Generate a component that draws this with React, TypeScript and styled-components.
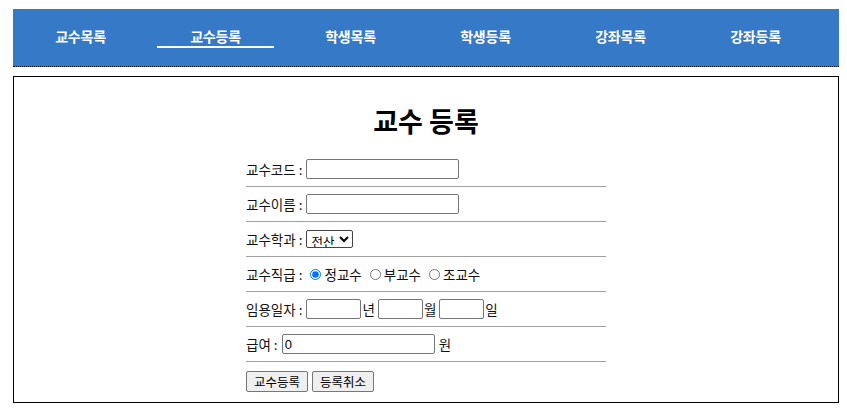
import { useState } from "react";
import styled, { createGlobalStyle } from "styled-components";

const GlobalStyle = createGlobalStyle`
  body {
    margin: 0;
    padding: 9px 8px 0 13px;
    background: #fff;
    font-family: "Noto Sans CJK KR", "Malgun Gothic", sans-serif;
    font-size: 13.5px;
    color: #111;
  }
`;

const menus = ["교수목록", "교수등록", "학생목록", "학생등록", "강좌목록", "강좌등록"];

export default function App() {
  const [rank, setRank] = useState("정교수");

  return (
    <>
      <GlobalStyle />
      <Header>
        <NavList>
          {menus.map((m) => (
            <NavItem key={m}>
              <NavLink $active={m === "교수등록"}>{m}</NavLink>
            </NavItem>
          ))}
        </NavList>
      </Header>

      <Main>
        <Title>교수 등록</Title>
        <Form onSubmit={(e) => e.preventDefault()}>
          <Row>
            <Label>교수코드 :</Label>
            <TextInput $width={153} />
          </Row>
          <Row>
            <Label>교수이름 :</Label>
            <TextInput $width={153} />
          </Row>
          <Row>
            <Label>교수학과 :</Label>
            <Select defaultValue="전산">
              <option>전산</option>
              <option>전자</option>
              <option>기계</option>
            </Select>
          </Row>
          <Row>
            <Label>교수직급 :</Label>
            {["정교수", "부교수", "조교수"].map((r) => (
              <RadioLabel key={r}>
                <Radio
                  type="radio"
                  name="rank"
                  checked={rank === r}
                  onChange={() => setRank(r)}
                />
                {r}
              </RadioLabel>
            ))}
          </Row>
          <Row>
            <Label>임용일자 :</Label>
            <TextInput $width={55} />
            <Unit>년</Unit>
            <TextInput $width={45} />
            <Unit>월</Unit>
            <TextInput $width={45} />
            <Unit>일</Unit>
          </Row>
          <Row>
            <Label>급여 :</Label>
            <TextInput $width={153} defaultValue="0" />
            <Unit $left={4}>원</Unit>
          </Row>
          <ButtonRow>
            <Button type="submit">교수등록</Button>
            <Button type="button">등록취소</Button>
          </ButtonRow>
        </Form>
      </Main>
    </>
  );
}

const Header = styled.header`
  width: 826px;
  height: 58px;
  background: #3679c6;
  border-bottom: 1px dotted #000;
  box-sizing: border-box;
  padding-top: 17px;
`;

const NavList = styled.ul`
  display: flex;
  margin: 0;
  padding: 0;
  list-style: none;
`;

const NavItem = styled.li`
  flex: 0 0 135px;
  display: flex;
  justify-content: center;
`;

const NavLink = styled.a<{ $active?: boolean }>`
  display: block;
  width: 117px;
  height: 20px;
  line-height: 20px;
  text-align: center;
  color: #fff;
  font-weight: 700;
  font-size: 14px;
  letter-spacing: -0.2px;
  cursor: pointer;
  border-bottom: 2px solid ${(p) => (p.$active ? "#fff" : "transparent")};
`;

const Main = styled.main`
  width: 826px;
  height: 327px;
  margin-top: 9px;
  border: 1px solid #000;
  box-sizing: border-box;
  display: flex;
  flex-direction: column;
  align-items: center;
  padding-top: 26px;
`;

const Title = styled.h2`
  margin: 0 0 13px;
  font-size: 27px;
  line-height: 36px;
  font-weight: 700;
  color: #000;
`;

const Form = styled.form`
  width: 360px;
  display: flex;
  flex-direction: column;
`;

const Row = styled.div`
  display: flex;
  align-items: center;
  height: 34px;
  border-bottom: 1px solid #a0a0a0;
  box-sizing: content-box;
`;

const Label = styled.span`
  margin-right: 4px;
  white-space: nowrap;
`;

const TextInput = styled.input<{ $width: number }>`
  width: ${(p) => p.$width}px;
  height: 20px;
  box-sizing: border-box;
  border: 1px solid #767676;
  border-radius: 2px;
  padding: 1px 2px;
  font-family: "Liberation Sans", Arial, sans-serif;
  font-size: 13px;
  background: #fff;
`;

const Unit = styled.span<{ $left?: number }>`
  margin: 0 3px 0 ${(p) => p.$left ?? 1}px;
`;

const Select = styled.select`
  height: 18px;
  width: 47px;
  box-sizing: border-box;
  border: 1px solid #444;
  border-radius: 2px;
  padding: 0;
  font-family: "Noto Sans CJK KR", sans-serif;
  font-size: 12.5px;
  background: #fff;
  color: #000;
`;

const RadioLabel = styled.label`
  display: inline-flex;
  align-items: center;
  margin-right: 4px;
`;

const Radio = styled.input`
  width: 11px;
  height: 11px;
  margin: 0 3px 0 4px;
  accent-color: #0075ff;
`;

const ButtonRow = styled.div`
  display: flex;
  gap: 4px;
  padding-top: 9px;
`;

const Button = styled.button`
  height: 21px;
  padding: 0 7px;
  border: 1px solid #767676;
  border-radius: 2px;
  background: #efefef;
  font-family: "Noto Sans CJK KR", sans-serif;
  font-size: 12.5px;
  color: #000;
  cursor: pointer;
`;
